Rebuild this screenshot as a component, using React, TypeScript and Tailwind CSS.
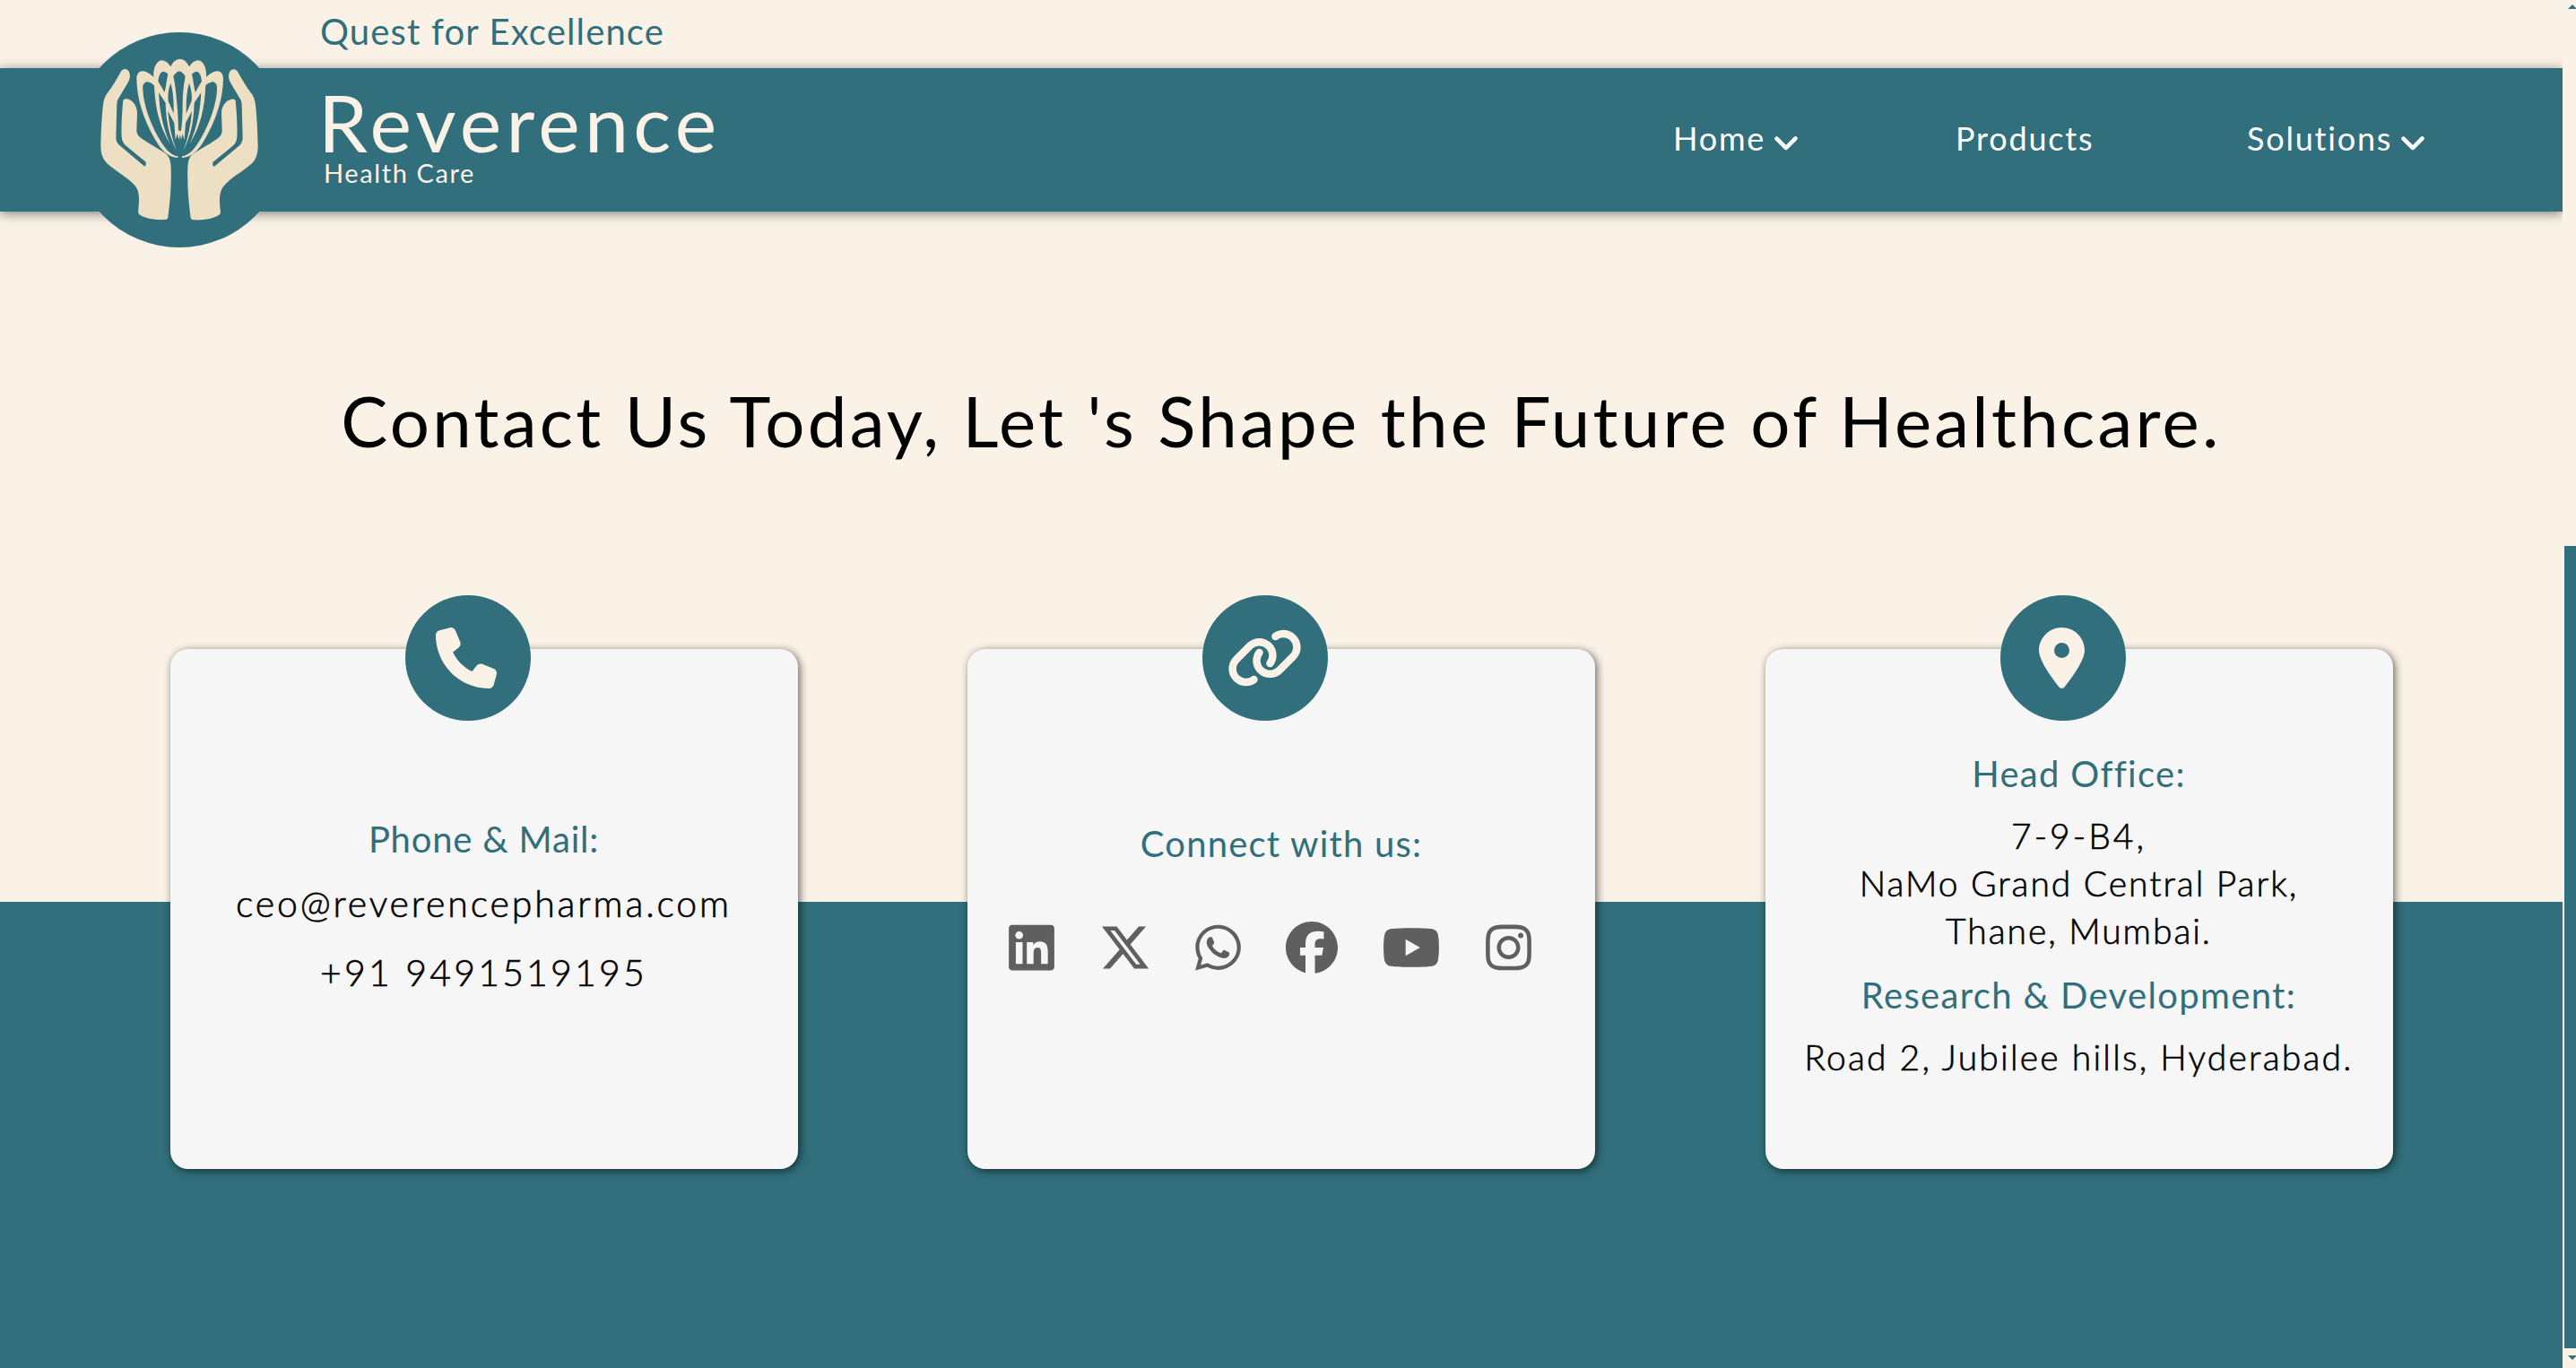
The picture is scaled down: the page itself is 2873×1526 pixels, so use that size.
import React from "react";
import {
  FaChevronDown,
  FaFacebook,
  FaInstagram,
  FaLink,
  FaLinkedin,
  FaLocationDot,
  FaPhone,
  FaWhatsapp,
  FaXTwitter,
  FaYoutube,
} from "react-icons/fa6";

const HAND =
  "M163 182 C170 167 187 167 193 183 C197 196 194 206 188 217 L154 274 Q151 281 151 290 L148 402 Q148 414 157 424 L244 497 Q250 492 248 482 L182 428 Q168 416 167 398 C165 365 168 315 172 275 Q175 269 186 271 C204 275 219 295 219 318 L217 378 Q218 391 229 400 C250 416 282 433 312 452 C325 461 331 475 332 500 C334 560 329 615 322 669 Q320 674 314 675 C280 677 245 672 225 657 Q221 653 223 640 C227 602 226 580 212 562 C190 535 150 515 117 486 Q97 466 97 430 C98 370 102 310 106 283 Q108 266 117 254 C135 232 150 205 163 182Z";

const PETALS =
  "M217 205 C217 180 232 174 248 180 Q263 186 274 197 C272 165 285 142 303 142 Q319 144 331 163 C340 145 349 138 363 138 L363 410 L355 467 C325 470 297 440 278 405 C240 340 218 270 217 205Z";

const PETAL_GAPS =
  "M238 240 C236 219 248 211 258 215 Q268 217 276 226 C279 300 292 360 329 422 C303 360 294 310 291 250 L314 284 C316 350 325 390 350 443 C334 400 325 355 322 312 L343 352 L347 409 L353 388 L358 407 L362 390 L364 470 L356 463 C330 462 308 432 290 400 C262 350 240 290 238 240Z M289 212 Q292 182 306 179 Q316 180 322 188 Q318 205 316 222 Q314 237 310 249 Q302 232 289 212Z M331 218 Q320 248 323 278 L341 320 Q342 250 331 218Z";

function Logo() {
  return (
    <svg viewBox="0 48 720 720" className="absolute left-20 top-9 z-20 size-60">
      <circle cx="360" cy="408" r="360" fill="#306f7b" />
      <g fill="#ecdfc4">
        <path d={HAND} />
        <path d={HAND} transform="translate(720 1) scale(-1 1)" />
        <path d={PETALS} />
        <path d={PETALS} transform="translate(724 0) scale(-1 1)" />
      </g>
      <g fill="#306f7b">
        <path d={PETAL_GAPS} />
        <path d={PETAL_GAPS} transform="translate(724 0) scale(-1 1)" />
        <path d="M340 196 Q348 182 360 178 Q372 182 380 196 Q371 240 371 290 Q371 340 366 377 L357 377 Q356 320 351 275 Q347 225 340 196Z" />
      </g>
      <path d="M346 463 L354 466 M370 466 L380 463" stroke="#ecdfc4" strokeWidth="3" />
    </svg>
  );
}

function Card({ icon, children }: { icon: React.ReactNode; children: React.ReactNode }) {
  return (
    <section className="relative flex h-[580px] w-[700px] flex-col rounded-[20px] bg-[#f6f6f6] text-center shadow-[2px_2px_10px_rgba(0,0,0,0.6)]">
      <div className="absolute -top-[60px] left-[262px] flex size-[140px] items-center justify-center rounded-full bg-[#306f7b] text-[#faf2e6]">
        {icon}
      </div>
      {children}
    </section>
  );
}

export default function App() {
  return (
    <div className="flex h-[1526px] w-[2873px] overflow-hidden bg-[#faf2e6] font-['Lato',sans-serif]">
      <div className="relative flex w-[2858px] flex-col overflow-hidden">
        <Logo />
        <div className="h-[76px] pl-[357px] pt-[10px] text-[40px] leading-[50px] tracking-[1.14px] text-[#306f7b]">
          Quest for Excellence
        </div>

        <header className="relative z-10 flex h-40 bg-[#306f7b] pl-[355px] text-[#faf2e6] shadow-[0_2px_12px_rgba(0,0,0,0.5)]">
          <div className="pt-5">
            <div className="text-[88px] leading-20 tracking-[5.3px]">Reverence</div>
            <div className="pl-1.5 text-[29px] leading-[34px] tracking-[1.6px]">Health Care</div>
          </div>
          <nav className="ml-auto grid w-[992px] grid-cols-[315px_325px_auto] items-center pb-1 text-[36px] tracking-[1.8px] text-white">
            <a className="flex items-center gap-[9px]">
              Home
              <FaChevronDown className="relative top-1 size-7 stroke-white [stroke-width:20px]" />
            </a>
            <a>Products</a>
            <a className="flex items-center gap-[9px]">
              Solutions
              <FaChevronDown className="relative top-1 size-7 stroke-white [stroke-width:20px]" />
            </a>
          </nav>
        </header>

        <main className="flex-1 bg-[linear-gradient(#faf2e6_770px,#306f7b_770px)]">
          <h1 className="pt-[188px] text-center text-[78px] leading-[90px] tracking-[3.26px] text-black">
            Contact Us Today, Let 's Shape the Future of Healthcare.
          </h1>

          <div className="mt-[210px] flex justify-between px-[189.5px]">
            <Card icon={<FaPhone className="mr-[3px] size-[68px]" />}>
              <h2 className="mt-[187px] text-[40px] leading-[50px] tracking-[0.8px] text-[#306f7b]">Phone &amp; Mail:</h2>
              <p className="mt-[22px] text-[41px] font-light leading-[50px] tracking-[2.85px] text-black [-webkit-text-stroke:0.6px]">
                ceo@reverencepharma.com
              </p>
              <p className="mt-[27px] text-[41px] font-light leading-[50px] tracking-[3.2px] text-black [-webkit-text-stroke:0.6px]">
                +91 9491519195
              </p>
            </Card>

            <Card icon={<FaLink className="mr-0.5 h-[68px] w-[85px]" />}>
              <h2 className="mt-[192px] text-[40px] leading-[50px] tracking-[1.2px] text-[#306f7b]">Connect with us:</h2>
              <div className="mt-[62px] flex items-center gap-[49.5px] pl-[46px] text-[#5f5f5f]">
                <FaLinkedin className="h-[58px] w-[51px]" />
                <FaXTwitter className="h-[58px] w-[58px]" />
                <FaWhatsapp className="h-[58px] w-[51px]" />
                <FaFacebook className="h-[58px] w-[58px]" />
                <FaYoutube className="h-[58px] w-[66px]" />
                <FaInstagram className="h-[58px] w-[51px]" />
              </div>
            </Card>

            <Card icon={<FaLocationDot className="mr-[3px] h-[68px] w-[51px]" />}>
              <h2 className="mt-[114px] text-[40px] leading-[50px] tracking-[1.3px] text-[#306f7b]">Head Office:</h2>
              <div className="mt-[18px] text-[39px] font-light leading-[53px] tracking-[1.95px] text-black [-webkit-text-stroke:0.6px]">
                <p className="tracking-[3px]">7-9-B4,</p>
                <p>NaMo Grand Central Park,</p>
                <p>Thane, Mumbai.</p>
              </div>
              <h2 className="mt-[20px] text-[40px] leading-[50px] tracking-[1.35px] text-[#306f7b]">
                Research &amp; Development:
              </h2>
              <p className="mt-[18px] text-[39px] font-light leading-[53px] tracking-[2.22px] text-black [-webkit-text-stroke:0.6px]">
                Road 2, Jubilee hills, Hyderabad.
              </p>
            </Card>
          </div>
        </main>
      </div>

      <div className="flex w-[15px] flex-col overflow-hidden pl-0.5">
        <svg viewBox="0 0 9 5" className="ml-1 mt-[5px] h-[5px] w-[9px] shrink-0">
          <path d="M0 5 L5 0 L9 4 V5Z" fill="#306f7b" />
        </svg>
        <div className="mt-[599px] h-[895px] w-[13px] shrink-0 bg-[#306f7b]" />
        <svg viewBox="0 0 9 5" className="ml-1 mt-2 h-[5px] w-[9px] shrink-0">
          <path d="M0 0 H9 V1 L5 5Z" fill="#306f7b" />
        </svg>
      </div>
    </div>
  );
}
